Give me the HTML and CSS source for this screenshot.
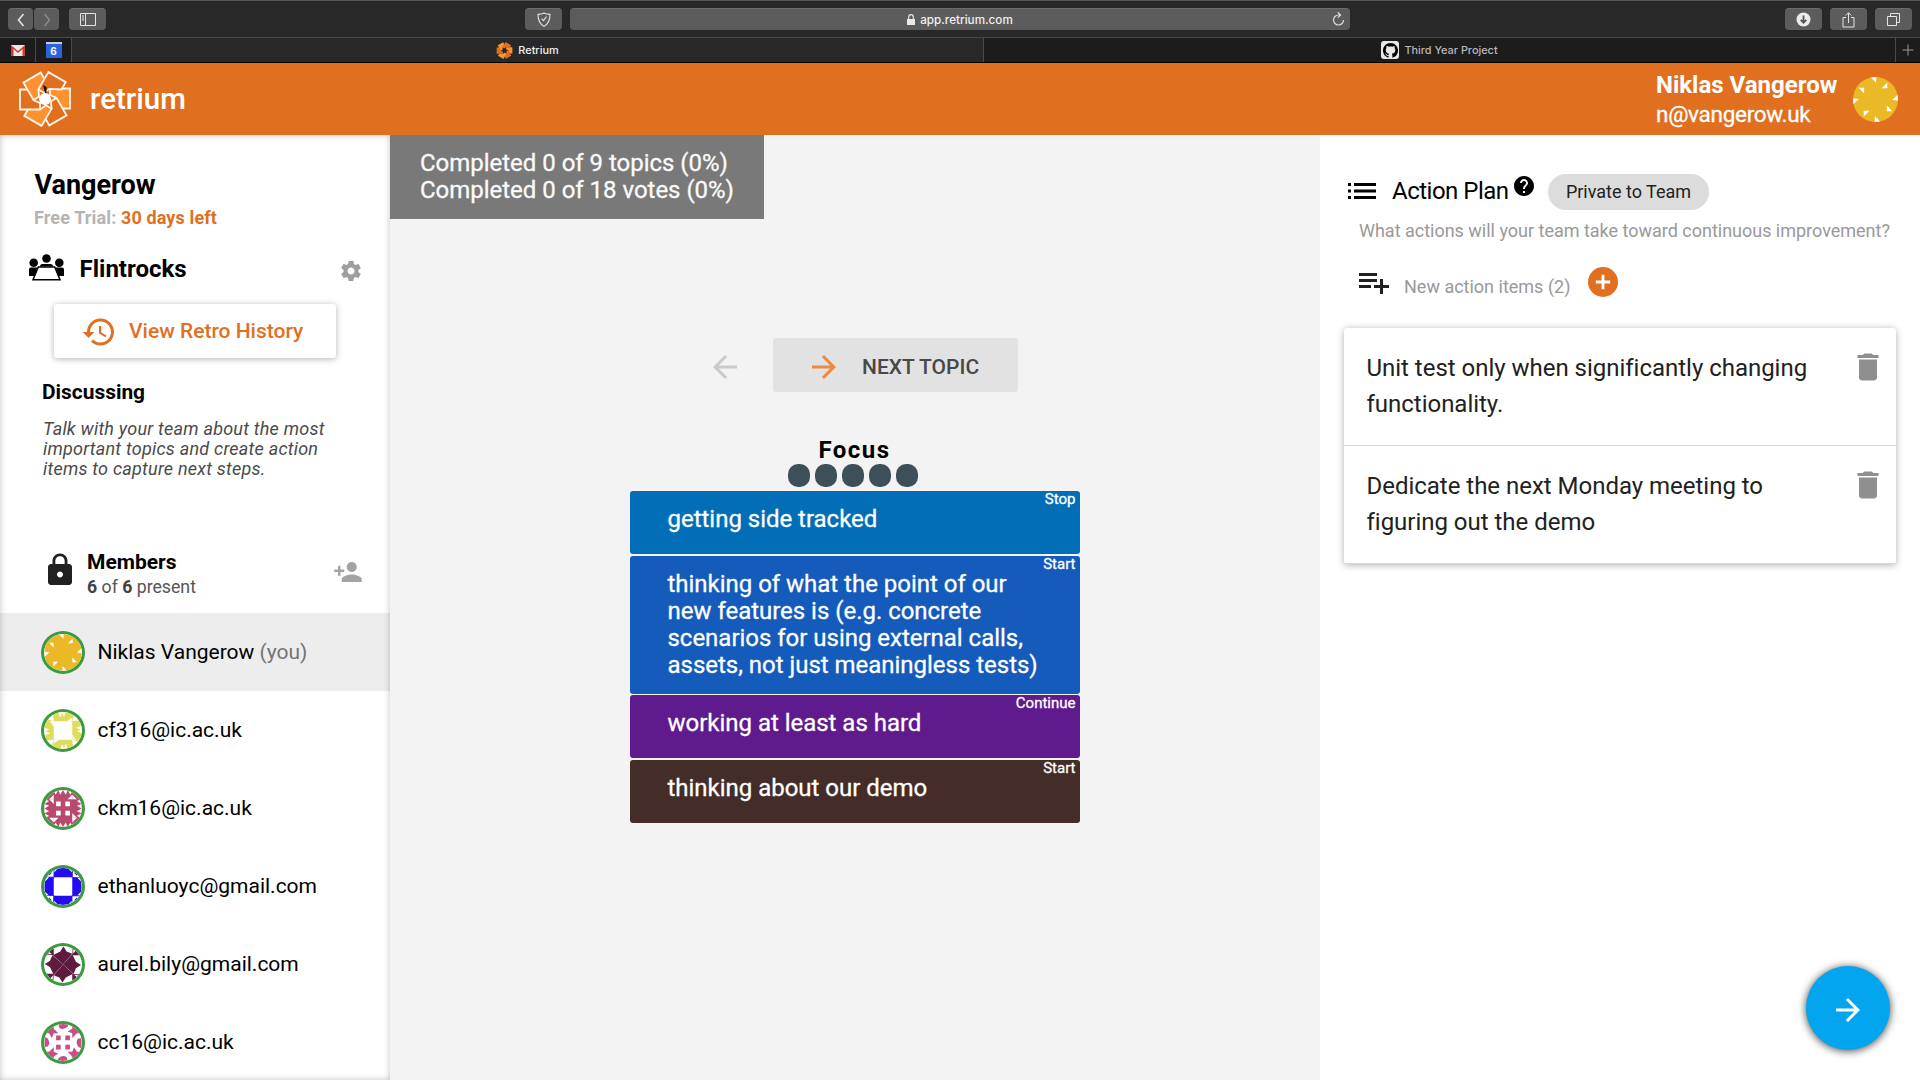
FILE: index.html
```html
<!DOCTYPE html>
<html lang="en">
<head>
<meta charset="utf-8">
<title>Retrium</title>
<link rel="stylesheet" href="styles.css">
</head>
<body>
<svg class="defs" aria-hidden="true">
  <path id="bladeL" class="light" d="M5-10.500H25V9.500H16.500L11-1.200 5-4Z"/>
  <path id="bladeD" class="dark" d="M5-10.500H25V9.500H16.500L11-1.200 5-4Z"/>
  <symbol id="trash" viewBox="0 0 24 24"><path d="M6 19c0 1.100.9 2 2 2h8c1.100 0 2-.9 2-2V7H6v12zM19 4h-3.500l-1-1h-5l-1 1H5v2h14V4z"/></symbol>
  <symbol id="forward" viewBox="0 0 24 24"><path d="M12 4l-1.410 1.410L16.170 11H4v2h12.170l-5.580 5.590L12 20l8-8z"/></symbol>
  <symbol id="sun" viewBox="-20 -20 40 40">
    <rect x="-20" y="-20" width="40" height="40" fill="#ebb927"/>
    <g id="sunq" fill="#fff"><path d="M-4.500-20H.8L.4-14.800ZM10.500-15V-10.100H5.300Z"/></g>
    <use href="#sunq" transform="rotate(90)"/><use href="#sunq" transform="rotate(180)"/><use href="#sunq" transform="rotate(270)"/>
  </symbol>
</svg>

<header class="browser">
  <div class="toolbar">
    <div class="nav">
      <span class="btn back"><svg width="10" height="16" viewBox="0 0 10 16"><path d="M7.500 2 2.500 8l5 6" fill="none" stroke="#e4e4e4" stroke-width="1.600"/></svg></span>
      <span class="btn back"><svg width="10" height="16" viewBox="0 0 10 16"><path d="M2.500 2l5 6-5 6" fill="none" stroke="#8c8c8c" stroke-width="1.400"/></svg></span>
      <span class="btn side"><svg width="16" height="13" viewBox="0 0 16 13" fill="none" stroke="#e4e4e4"><path d="M.5.5h15v12H.5zM5.500.5v12M2 3h2M2 5h2M2 7h2"/></svg></span>
    </div>
    <span class="btn shield"><svg width="14" height="15" viewBox="0 0 14 15" fill="none" stroke="#e4e4e4" stroke-width="1.100"><path d="M7 1c2 1 4 1.300 6 1.400 0 5-1.500 9.300-6 12C2.500 11.700 1 7.400 1 2.400 3 2.300 5 2 7 1zM4.500 6.700l2 2 3-4"/></svg></span>
    <div class="address">
      <svg width="8" height="11" viewBox="0 0 8 11"><path d="M0 5h8v6H0z" fill="#e8e8e8"/><path d="M1.700 5V3a2.300 2.300 0 0 1 4.600 0v2" fill="none" stroke="#e8e8e8" stroke-width="1.200"/></svg>
      <span>app.retrium.com</span>
      <svg class="reload" width="13" height="14" viewBox="0 0 13 14" fill="none" stroke="#dedede" stroke-width="1.200"><path d="M8 3H6.500a5 5 0 1 0 5 5M5.800.3 8.600 3 5.800 5.600"/></svg>
    </div>
    <div class="tools">
      <span class="btn side"><svg width="15" height="15" viewBox="0 0 15 15"><circle cx="7.500" cy="7.500" r="7" fill="#ececec"/><path d="M7.500 3.500v7M4.700 7.800l2.800 2.900 2.800-2.900" fill="none" stroke="#555" stroke-width="1.800"/></svg></span>
      <span class="btn side"><svg width="13" height="16" viewBox="0 0 13 16" fill="none" stroke="#e4e4e4"><path d="M4 5.500H1v9.500h11V5.500H9M6.500 11V1M3.700 3.500l2.800-2.800 2.800 2.800"/></svg></span>
      <span class="btn side"><svg width="13" height="13" viewBox="0 0 13 13" fill="none" stroke="#e4e4e4"><path d="M.5 3.500h9v9h-9zM3.500 3.500v-3h9v9h-3"/></svg></span>
    </div>
  </div>
  <div class="tabs">
    <div class="pin"><svg width="14" height="11" viewBox="0 0 14 11"><path d="M0 0h14v11H0z" fill="#e9e9e9"/><path d="M0 11V0l7 6 7-6v11h-2.500V4L7 8 2.500 4v7z" fill="#d93a30"/></svg></div>
    <div class="pin cal"><span>6</span></div>
    <div class="tab active"><svg class="fav" width="17" height="17" viewBox="-27 -27 54 54"><use href="#bladeL"/><use href="#bladeD" transform="rotate(60)"/><use href="#bladeL" transform="rotate(120)"/><use href="#bladeD" transform="rotate(180)"/><use href="#bladeL" transform="rotate(240)"/><use href="#bladeD" transform="rotate(300)"/></svg><span>Retrium</span></div>
    <div class="tab"><span class="gh"><svg width="15" height="15" viewBox="0 0 16 16"><path d="M8 0C3.580 0 0 3.580 0 8c0 3.540 2.290 6.530 5.470 7.590.4.070.55-.17.55-.38 0-.19-.01-.82-.01-1.490-2.010.37-2.530-.49-2.690-.94-.09-.23-.48-.94-.82-1.130-.28-.15-.68-.52-.01-.53.63-.01 1.080.58 1.230.82.72 1.210 1.870.87 2.330.66.070-.52.280-.87.510-1.070-1.780-.2-3.640-.89-3.640-3.950 0-.87.310-1.590.82-2.150-.08-.2-.36-1.020.08-2.120 0 0 .67-.21 2.200.82.640-.18 1.320-.27 2-.27s1.360.09 2 .27c1.530-1.040 2.200-.82 2.200-.82.440 1.100.160 1.920.080 2.120.510.560.820 1.270.820 2.150 0 3.070-1.870 3.750-3.650 3.950.290.250.540.730.540 1.480 0 1.070-.01 1.930-.01 2.200 0 .210.150.460.550.380A8.010 8.010 0 0 0 16 8c0-4.420-3.580-8-8-8z"/></svg></span><span>Third Year Project</span></div>
    <div class="newtab"><svg width="12" height="12" viewBox="0 0 12 12"><path d="M6 .5v11M.5 6h11" stroke="#9a9a9a"/></svg></div>
  </div>
</header>

<div class="appbar">
  <svg class="logo" width="56" height="56" viewBox="-28 -28 56 56"><use href="#bladeL"/><use href="#bladeD" transform="rotate(60)"/><use href="#bladeL" transform="rotate(120)"/><use href="#bladeD" transform="rotate(180)"/><use href="#bladeL" transform="rotate(240)"/><use href="#bladeD" transform="rotate(300)"/><circle r="6" fill="#fff"/><path d="M-2-14 1.500-12 1.500-6 0-6Z" fill="#111"/></svg>
  <span class="brand">retrium</span>
  <div class="who"><b>Niklas Vangerow</b><span>n@vangerow.uk</span></div>
  <svg class="me" width="45" height="45"><use href="#sun"/></svg>
</div>

<div class="app">
  <aside class="sidebar">
    <h1>Vangerow</h1>
    <div class="trial">Free Trial: <em>30 days left</em></div>
    <div class="team">
      <svg width="35" height="27" viewBox="0 0 35 27"><circle cx="17.500" cy="4.500" r="4.300"/><circle cx="4.700" cy="8.700" r="4.300"/><circle cx="30.300" cy="8.700" r="4.300"/><path d="M0 22v-6.500q0-2 2-2h6.500L5.500 22zM35 22v-6.500q0-2-2-2h-6.500l3 8.500zM11 12.500q0-2.500 2.500-2.500h8q2.500 0 2.500 2.500z"/><path d="M9.300 13h16.400l5.300 12.700H4z" fill="#fff" stroke="#000" stroke-width="1.500"/></svg>
      <h2>Flintrocks</h2>
      <svg class="gear" width="24" height="24" viewBox="0 0 24 24"><path d="M19.430 12.980c.04-.32.070-.64.070-.98s-.03-.66-.07-.98l2.110-1.650c.19-.15.240-.42.120-.64l-2-3.460c-.12-.22-.39-.3-.61-.22l-2.490 1c-.52-.4-1.080-.73-1.690-.98l-.38-2.650C14.460 2.180 14.250 2 14 2h-4c-.25 0-.46.180-.49.420l-.38 2.650c-.61.250-1.170.590-1.690.98l-2.490-1c-.23-.09-.49 0-.61.220l-2 3.460c-.13.220-.07.490.12.640l2.110 1.650c-.04.320-.07.650-.07.980s.03.660.07.980l-2.110 1.650c-.19.150-.24.420-.12.640l2 3.460c.12.220.39.300.61.220l2.490-1c.52.400 1.080.730 1.690.980l.38 2.650c.03.240.24.420.49.420h4c.25 0 .46-.18.49-.42l.38-2.650c.61-.25 1.170-.59 1.690-.98l2.490 1c.23.090.49 0 .61-.22l2-3.460c.12-.22.070-.49-.12-.64l-2.110-1.650zM12 15.500c-1.930 0-3.500-1.570-3.500-3.500s1.570-3.500 3.500-3.500 3.500 1.570 3.500 3.500-1.570 3.500-3.500 3.500z"/></svg>
    </div>
    <div class="history">
      <svg width="36" height="36" viewBox="0 0 24 24"><path d="M13 3c-4.970 0-9 4.030-9 9H1l3.890 3.890.070.140L9 12H6c0-3.870 3.130-7 7-7s7 3.130 7 7-3.130 7-7 7c-1.930 0-3.680-.79-4.940-2.060l-1.420 1.420C8.270 19.990 10.510 21 13 21c4.970 0 9-4.030 9-9s-4.030-9-9-9zm-1 5v5l4.280 2.540.720-1.210-3.500-2.080V8H12z"/></svg>
      <span>View Retro History</span>
    </div>
    <h3>Discussing</h3>
    <p class="hint">Talk with your team about the most important topics and create action items to capture next steps.</p>
    <div class="members">
      <svg class="lock" width="36" height="36" viewBox="0 0 24 24"><path d="M18 8h-1V6c0-2.760-2.240-5-5-5S7 3.240 7 6v2H6c-1.100 0-2 .9-2 2v10c0 1.100.9 2 2 2h12c1.100 0 2-.9 2-2V10c0-1.100-.9-2-2-2zm-6 9c-1.100 0-2-.9-2-2s.9-2 2-2 2 .9 2 2-.9 2-2 2zm3.100-9H8.900V6c0-1.710 1.390-3.100 3.100-3.100s3.100 1.390 3.100 3.100v2z"/></svg>
      <div class="count"><b>Members</b><span><strong>6</strong> of <strong>6</strong> present</span></div>
      <svg class="invite" width="30" height="30" viewBox="0 0 24 24"><path d="M15 12c2.210 0 4-1.790 4-4s-1.790-4-4-4-4 1.790-4 4 1.790 4 4 4zm-9-2V7H4v3H1v2h3v3h2v-3h3v-2H6zm9 4c-2.670 0-8 1.340-8 4v2h16v-2c0-2.660-5.330-4-8-4z"/></svg>
    </div>
    <ul>
      <li class="self"><span class="av"><svg><use href="#sun"/></svg></span>Niklas Vangerow&nbsp;<i>(you)</i></li>
      <li><span class="av"><svg viewBox="-20 -20 40 40" fill="#dfdc5a"><g id="cfq"><path d="M-10-20H10V-10H-10ZM-20-20H-10V-10H-20Z"/><path d="M-19-15-10-10-11-20ZM-10-20-5-19-3-14-1-19 1-15 3-20ZM10-14 4-10H10ZM-16-12-10-10-14-17Z" fill="#fff"/></g><use href="#cfq" transform="rotate(90)"/><use href="#cfq" transform="rotate(180)"/><use href="#cfq" transform="rotate(270)"/></svg></span>cf316@ic.ac.uk</li>
      <li><span class="av"><svg viewBox="-20 -20 40 40" fill="#fff"><rect x="-20" y="-20" width="40" height="40" fill="#b94a6e"/><g id="ckq"><path d="M-7.500-7.500h5v5h-5zM-10-20-5-20-8-15ZM-5-20H0L-3-15ZM5-20H0L3-15ZM10-20H5L8-15ZM-15-10-10-15V-10ZM10-15V-10H5ZM-20-10-15-15-13-20H-20Z"/></g><use href="#ckq" transform="rotate(90)"/><use href="#ckq" transform="rotate(180)"/><use href="#ckq" transform="rotate(270)"/></svg></span>ckm16@ic.ac.uk</li>
      <li><span class="av"><svg viewBox="-20 -20 40 40" fill="#240cf0"><g id="etq"><path d="M-10-20H10V-10H-10Z"/><path d="M-10-15-5-20H-10ZM10-15 5-20H10Z" fill="#fff"/><path d="M-16-16l4 1-3 3zM-20.500-10.500H-10V-20h.6V-9.500H-20z"/></g><use href="#etq" transform="rotate(90)"/><use href="#etq" transform="rotate(180)"/><use href="#etq" transform="rotate(270)"/></svg></span>ethanluoyc@gmail.com</li>
      <li><span class="av"><svg viewBox="-20 -20 40 40" fill="#5f1b3f"><g id="auq"><path d="M0 0-11-10-3-14 .5-19.500 4-14 10-11.500ZM-18-10.500-10-20V-10ZM-15-20h5v5z"/><path d="M-15.500-14l3.500 3h-4z" fill="#fff"/></g><use href="#auq" transform="rotate(90)"/><use href="#auq" transform="rotate(180)"/><use href="#auq" transform="rotate(270)"/></svg></span>aurel.bily@gmail.com</li>
      <li><span class="av"><svg viewBox="-20 -20 40 40" fill="#c94d86"><g id="ccq"><path d="M-7.500-7.500h5v5h-5zM-5-20H6L5-17Q0-13-4-16ZM-20-10-10-20V-15L-5-10H-10L-12-5-15-10Z"/></g><use href="#ccq" transform="rotate(90)"/><use href="#ccq" transform="rotate(180)"/><use href="#ccq" transform="rotate(270)"/></svg></span>cc16@ic.ac.uk</li>
    </ul>
  </aside>

  <main class="board">
    <div class="progress">Completed 0 of 9 topics (0%)<br>Completed 0 of 18 votes (0%)</div>
    <div class="pager">
      <svg class="prev" width="36" height="36"><use href="#forward"/></svg>
      <div class="next"><svg width="36" height="36"><use href="#forward"/></svg><span>NEXT TOPIC</span></div>
    </div>
    <h2 class="focus">Focus</h2>
    <div class="dots"><i></i><i></i><i></i><i></i><i></i></div>
    <div class="cards">
      <div class="card blue"><small>Stop</small>getting side tracked</div>
      <div class="card royal"><small>Start</small>thinking of what the point of our new features is (e.g. concrete scenarios for using external calls, assets, not just meaningless tests)</div>
      <div class="card purple"><small>Continue</small>working at least as hard</div>
      <div class="card brown"><small>Start</small>thinking about our demo</div>
    </div>
  </main>

  <section class="plan">
    <div class="planhead">
      <svg width="28" height="16" viewBox="0 0 28 16"><path d="M0 0h3v3H0zM6 0h22v3H6zM0 6.500h3v3H0zM6 6.500h22v3H6zM0 13h3v3H0zM6 13h22v3H6z"/></svg>
      <h2>Action Plan</h2>
      <svg class="help" width="24" height="24" viewBox="0 0 24 24"><path d="M12 2C6.480 2 2 6.480 2 12s4.480 10 10 10 10-4.480 10-10S17.520 2 12 2zm1 17h-2v-2h2v2zm2.070-7.750l-.9.920C13.450 12.900 13 13.500 13 15h-2v-.5c0-1.100.45-2.100 1.170-2.830l1.240-1.260c.37-.36.590-.86.590-1.410 0-1.100-.9-2-2-2s-2 .9-2 2H8c0-2.210 1.790-4 4-4s4 1.790 4 4c0 .88-.36 1.680-.93 2.250z"/></svg>
      <span class="pill">Private to Team</span>
    </div>
    <p class="question">What actions will your team take toward continuous improvement?</p>
    <div class="newitems">
      <svg width="30" height="21" viewBox="0 0 30 21" fill="#212121"><path d="M0 0h18v3H0zM0 6h18v3H0zM0 12h12v3H0zM21 6h3v6h6v3h-6v6h-3v-6h-6v-3h6z"/></svg>
      <span>New action items (2)</span>
      <svg class="add" width="30" height="30" viewBox="0 0 30 30"><circle cx="15" cy="15" r="15" fill="#e0701f"/><path d="M15 7.800v14.400M7.800 15h14.400" stroke="#fff" stroke-width="2.800"/></svg>
    </div>
    <div class="items">
      <div class="item"><p>Unit test only when significantly changing functionality.</p><svg width="36" height="36"><use href="#trash"/></svg></div>
      <div class="item"><p>Dedicate the next Monday meeting to figuring out the demo</p><svg width="36" height="36"><use href="#trash"/></svg></div>
    </div>
    <div class="fab"><svg width="36" height="36"><use href="#forward"/></svg></div>
  </section>
</div>
</body>
</html>
```
FILE: styles.css
```css
* { box-sizing: border-box; margin: 0; padding: 0; }
body { width: 1920px; height: 1080px; overflow: hidden; font-family: Roboto, "Liberation Sans", sans-serif; color: #000; background: #fff; display: flex; flex-direction: column; }
svg { display: block; flex: none; }
.defs { position: absolute; width: 0; height: 0; }
.light { fill: #ff9230; }
.dark { fill: #e0701f; }
.logo { stroke: #fff6ec; stroke-width: 1.800; }
.logo circle, .logo > path { stroke: none; }

.browser { height: 63px; background: #282828; border-top: 1px solid #555; border-bottom: 1px solid #000; font-family: Inter, "Liberation Sans", sans-serif; }
.toolbar { height: 36px; padding: 0 8px; display: flex; align-items: center; }
.btn { height: 22px; border-radius: 4px; background: #5c5c5c; border-top: 1px solid #6c6c6c; display: flex; align-items: center; justify-content: center; }
.nav { display: flex; width: 517px; gap: 1px; }
.back { width: 25px; }
.side { width: 37px; }
.nav .side { margin-left: 9px; }
.shield { width: 37px; margin-right: 8px; }
.address { position: relative; width: 780px; height: 22px; border-radius: 4px; background: #5c5c5c; border-top: 1px solid #6c6c6c; display: flex; align-items: center; justify-content: center; gap: 5px; font-size: 11.700px; font-weight: 500; color: #f0f0f0; }
.reload { position: absolute; right: 5px; top: 3px; }
.tools { margin-left: auto; display: flex; gap: 8px; }
.tabs { height: 25px; border-top: 1px solid #4a4a4a; display: flex; background: #1c1c1c; font-size: 10.900px; font-weight: 500; color: #b8b8b8; }
.pin { width: 36px; border-right: 1px solid #4a4a4a; display: flex; align-items: center; justify-content: center; }
.cal span { width: 16px; height: 16px; background: #2a62e0; border-top: 2px solid #ccd; color: #fff; text-align: center; line-height: 14px; font-size: 10px; font-weight: 700; }
.tab { flex: 1; display: flex; align-items: center; justify-content: center; gap: 5px; border-right: 1px solid #4a4a4a; }
.active { background: #282828; color: #f0f0f0; }
.gh { width: 18px; height: 18px; border-radius: 3px; background: #e8e8e8; display: flex; align-items: center; justify-content: center; }
.newtab { width: 24px; display: flex; align-items: center; justify-content: center; }

.appbar { height: 72px; background: #e0701f; color: #fff; display: flex; align-items: center; padding: 0 22px 0 17px; }
.brand { font-size: 29.500px; font-weight: 500; margin-left: 17px; line-height: 36px; }
.who { margin: 2px 0 0 auto; width: 197px; font-size: 24px; line-height: 29px; display: flex; flex-direction: column; }
.who span { font-size: 22.500px; letter-spacing: -.28px; -webkit-text-stroke: .3px; }
.who b { font-weight: 700; }
.me { border-radius: 50%; }

.app { flex: 1; display: flex; min-height: 0; }
.sidebar { position: relative; width: 390px; padding-top: 34px; }
.sidebar::after { content: ""; position: absolute; inset: 0; box-shadow: inset 0 0 6px rgba(0, 0, 0, .25); }
h1 { font-size: 27px; line-height: 32px; margin-left: 34.500px; }
.trial { margin: 5px 0 0 34px; font-size: 18px; line-height: 23px; font-weight: 700; letter-spacing: .13px; color: #b4b4b4; }
.trial em { font-style: normal; color: #e0701f; }
.team { margin: 21px 27px 0 29px; height: 36px; display: flex; align-items: center; }
.team > svg:first-child { margin-top: -2px; }
.team h2 { font-size: 24px; line-height: 36px; margin: 2px 0 0 15.500px; }
.gear { margin: 6px 0 0 auto; fill: #9e9e9e; }
.history { margin: 18px 0 0 54px; width: 282px; height: 54px; border-radius: 3px; box-shadow: 0 1px 6px rgba(0, 0, 0, .3); display: flex; align-items: center; padding-left: 27px; gap: 12px; font-size: 21px; font-weight: 500; color: #e0701f; fill: #e0701f; }
.history svg { margin-top: 2px; }
h3 { margin: 22px 0 0 42px; font-size: 20.900px; line-height: 24px; }
.hint { margin: 15px 40px 0 43px; font-size: 18px; line-height: 20px; letter-spacing: .23px; font-style: italic; color: #4a4a4a; }
.members { height: 134px; padding: 73px 27px 0 42px; display: flex; align-items: flex-start; }
.count { margin-left: 9px; display: flex; flex-direction: column; color: #555; font-size: 17.700px; line-height: 24px; }
.count b { font-size: 21px; line-height: 26px; margin-top: -3px; color: #000; }
.count strong { color: #424242; }
.lock { fill: #212121; }
.invite { margin: 5px 0 0 auto; fill: #a3a3a3; }
ul { list-style: none; }
li { height: 78px; display: flex; align-items: center; padding-left: 41px; font-size: 21px; }
.self { background: #ededed; }
li i { font-style: normal; color: #757575; }
.av { width: 44px; height: 43px; margin-right: 12.500px; border: 3px solid #3c9a3f; border-radius: 50%; background: #fff; overflow: hidden; }
.av svg { width: 38px; height: 37px; border-radius: 50%; }

.board { width: 930px; background: #f3f3f3; display: flex; flex-direction: column; align-items: flex-start; }
.progress { width: 374px; height: 84px; background: #797979; color: #fafafa; padding: 15px 0 0 30px; font-size: 24px; line-height: 27px; letter-spacing: -.02px; -webkit-text-stroke: .3px; }
.pager { margin: 119px 0 0 317px; display: flex; align-items: center; }
.prev { transform: scaleX(-1); fill: #cacaca; margin: 3px 30px 0 0; }
.next { width: 245px; height: 54px; background: #e2e2e2; border-radius: 3px; display: flex; align-items: center; padding-left: 33px; gap: 20px; font-size: 21px; font-weight: 500; color: #484848; fill: #e98b45; }
.next svg { margin-top: 3px; }
.next span { margin-top: 3px; }
.focus { align-self: stretch; text-align: center; margin: 43px 0 0 -1px; font-size: 24px; line-height: 30px; letter-spacing: 1.5px; font-weight: 700; }
.dots { display: flex; gap: 5px; margin: -1px 0 4px 398px; }
.dots i { width: 22px; height: 23px; border-radius: 10px; background: #3d5059; }
.cards { width: 450px; margin-left: 240px; display: flex; flex-direction: column; gap: 1.500px; }
.card { position: relative; border-radius: 3px; padding: 15px 37px 0 37.500px; height: 63px; font-size: 24px; line-height: 27px; letter-spacing: -.02px; color: #fff; -webkit-text-stroke: .3px; }
.card small { position: absolute; right: 4.500px; top: 0; font-size: 15px; line-height: 16px; letter-spacing: 0; }
.blue { background: #016eb7; padding-top: 14.500px; }
.royal { background: #145bbb; height: 138px; }
.purple { background: #5f1a8e; padding-top: 14.500px; }
.brown { background: #442d29; }

.plan { position: relative; width: 600px; padding: 39px 24px 0; }
.planhead { display: flex; align-items: center; height: 36px; padding-left: 4px; }
.planhead > svg:first-child { margin-top: -2px; }
.planhead h2 { font-size: 24px; font-weight: 400; letter-spacing: -.5px; margin: -2px 0 0 16px; width: 117px; white-space: nowrap; }
.help { margin: -12px 0 0 3px; }
.pill { margin-left: 12px; height: 36px; width: 161px; border-radius: 18px; background: #dcdcdc; color: #212121; font-size: 18px; line-height: 36px; text-align: center; }
.question { margin: 9px 0 0 15px; font-size: 18px; line-height: 24px; letter-spacing: -.01px; color: #999; white-space: nowrap; }
.newitems { margin: 24px 0 0 15px; height: 30px; display: flex; align-items: center; font-size: 18px; color: #999; }
.newitems span { margin: 8px 19px 0 15px; width: 165px; white-space: nowrap; }
.newitems svg { margin-top: 3px; }
.newitems .add { margin: 0; }
.items { margin-top: 31px; border-radius: 3px; box-shadow: 0 1px 7px rgba(0, 0, 0, .32); }
.item { height: 118px; padding: 21px 10px 0 22.500px; display: flex; justify-content: space-between; border-bottom: 1px solid #d8d8d8; font-size: 24px; line-height: 36px; letter-spacing: -.02px; color: #212121; fill: #8f8f8f; }
.item p { width: 460px; padding-top: 1px; }
.fab { position: absolute; right: 30px; bottom: 30px; width: 84px; height: 84px; border-radius: 50%; background: #03a5ef; box-shadow: 0 1px 8px rgba(0, 0, 0, .75); display: flex; align-items: center; justify-content: center; fill: #fff; padding-top: 4px; }
```
